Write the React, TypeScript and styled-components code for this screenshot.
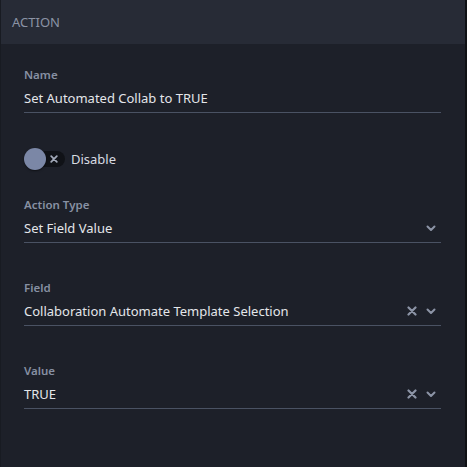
import React from 'react';
import styled, { createGlobalStyle } from 'styled-components';

const GlobalStyle = createGlobalStyle`
  html, body {
    margin: 0;
    padding: 0;
    background: #111318;
  }
  #root {
    width: 467px;
    height: 467px;
  }
`;

const Panel = styled.div`
  width: 467px;
  height: 467px;
  box-sizing: border-box;
  border-left: 1px solid #181b22;
  border-right: 2px solid #0f1115;
  background: #1d2029;
  font-family: 'Noto Sans', 'Open Sans', sans-serif;
  display: flex;
  flex-direction: column;
  overflow: hidden;
`;

const Header = styled.div`
  height: 44px;
  flex-shrink: 0;
  background: #272b36;
  display: flex;
  align-items: center;
  padding-left: 11px;
  font-size: 13px;
  color: #8b93a5;
`;

const Body = styled.div`
  display: flex;
  flex-direction: column;
  padding: 23px 24px 0 23px;
`;

const Field = styled.div<{ $gap: number }>`
  display: flex;
  flex-direction: column;
  margin-bottom: ${(p) => p.$gap}px;
`;

const Label = styled.div`
  font-size: 11.5px;
  font-weight: 600;
  color: #8790a3;
  line-height: 16px;
`;

const InputRow = styled.div`
  display: flex;
  align-items: center;
  height: 28px;
  border-bottom: 1px solid #4a5263;
  padding-top: 1px;
`;

const Value = styled.div`
  flex: 1;
  font-size: 13px;
  color: #e4e6ea;
  white-space: nowrap;
`;

const Icons = styled.div`
  display: flex;
  align-items: center;
  gap: 9px;
  padding-right: 5px;
  color: #8c94a6;
`;

const ToggleRow = styled.div`
  display: flex;
  align-items: center;
  gap: 6px;
  height: 24px;
  margin: 34px 0 26px 0;
`;

const Track = styled.div`
  position: relative;
  width: 41px;
  height: 16px;
  border-radius: 8px;
  background: #101217;
  display: flex;
  align-items: center;
  justify-content: flex-end;
  padding-right: 7px;
  box-sizing: border-box;
  color: #a1a8b8;
`;

const Knob = styled.div`
  position: absolute;
  left: 0;
  top: -3px;
  width: 22px;
  height: 22px;
  border-radius: 50%;
  background: #7b87a6;
  box-shadow: 0 1px 2px rgba(0, 0, 0, 0.5);
`;

const ToggleText = styled.span`
  font-size: 13px;
  color: #d8dbe2;
`;

const Cross = ({ size = 10 }: { size?: number }) => (
  <svg width={size} height={size} viewBox="0 0 10 10">
    <path d="M1.5 1.5 L8.5 8.5 M8.5 1.5 L1.5 8.5" stroke="currentColor" strokeWidth="2.2" strokeLinecap="round" />
  </svg>
);

const Chevron = () => (
  <svg width="10" height="7" viewBox="0 0 10 7">
    <path d="M1.5 1.5 L5 5 L8.5 1.5" stroke="currentColor" strokeWidth="2" fill="none" strokeLinecap="round" strokeLinejoin="round" />
  </svg>
);

const SelectField = ({ label, value, clearable, gap }: { label: string; value: string; clearable?: boolean; gap: number }) => (
  <Field $gap={gap}>
    <Label>{label}</Label>
    <InputRow>
      <Value>{value}</Value>
      <Icons>
        {clearable && <Cross />}
        <Chevron />
      </Icons>
    </InputRow>
  </Field>
);

export default function App() {
  return (
    <>
      <GlobalStyle />
      <Panel>
        <Header>ACTION</Header>
        <Body>
          <Field $gap={0}>
            <Label>Name</Label>
            <InputRow>
              <Value>Set Automated Collab to TRUE</Value>
            </InputRow>
          </Field>
          <ToggleRow>
            <Track>
              <Knob />
              <Cross size={8} />
            </Track>
            <ToggleText>Disable</ToggleText>
          </ToggleRow>
          <SelectField label="Action Type" value="Set Field Value" gap={37} />
          <SelectField label="Field" value="Collaboration Automate Template Selection" clearable gap={37} />
          <SelectField label="Value" value="TRUE" clearable gap={0} />
        </Body>
      </Panel>
    </>
  );
}
